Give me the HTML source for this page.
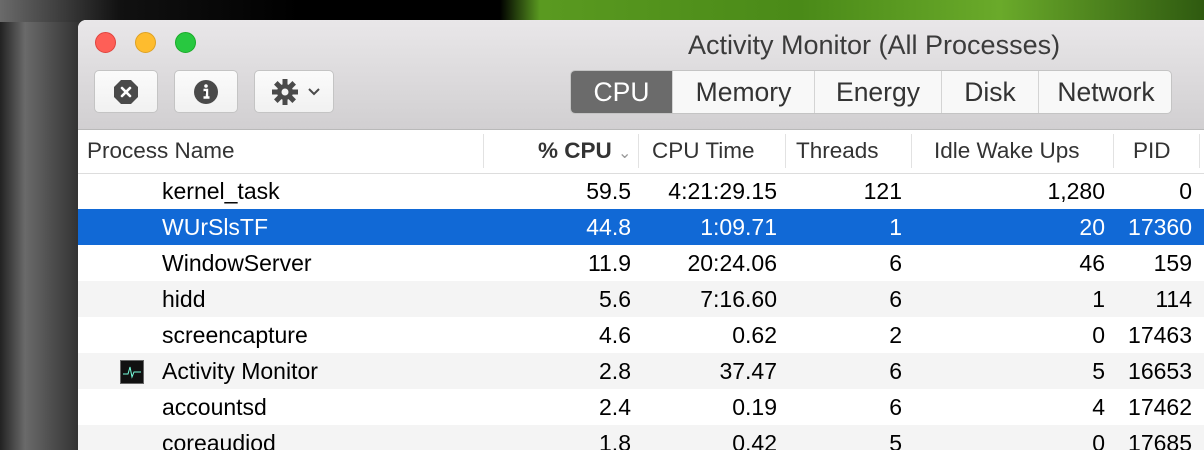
<!DOCTYPE html><html><head><style>
body{margin:0;width:1204px;height:436px;overflow:hidden;position:relative;font-family:"Liberation Sans",sans-serif;background:linear-gradient(90deg,#222 0,#6a6a6a 25px,#555 45px,#333 78px);}
.top{position:absolute;left:0;top:0;width:1204px;height:22px;background:linear-gradient(90deg,#6a6a6a 0,#111 120px,#000 300px,#000 500px,#5a9a20 540px,#4a8a18 800px,#6aaa2a 1000px,#2f5a10 1204px);}
.win{position:absolute;left:78px;top:20px;width:1140px;height:430px;background:#fff;border-radius:8px 8px 0 0;overflow:hidden;}
.tb{position:absolute;left:0;top:0;width:100%;height:109px;background:linear-gradient(#e9e7e9,#d1cfd1);border-bottom:1px solid #b9b9b9;}
.dot{position:absolute;top:12px;width:21px;height:21px;border-radius:50%;}
.title{position:absolute;left:610px;top:10px;font-size:27px;color:#3b3b3b;}
.btn{position:absolute;top:50px;height:43px;background:linear-gradient(#fbfbfb,#f1f1f1);border:1px solid #c4c4c4;border-radius:5px;box-sizing:border-box;}
.seg{position:absolute;top:50px;height:44px;border:1px solid #c4c4c4;border-radius:5px;background:#f8f8f8;box-sizing:border-box;left:492px;width:602px;overflow:hidden;}
.seg div{position:absolute;top:0;height:42px;line-height:42px;text-align:center;font-size:26.5px;color:#333;border-right:1px solid #d4d4d4;box-sizing:border-box;}
.hdr{position:absolute;top:110px;left:0;width:100%;height:43px;border-bottom:1px solid #ddd;font-size:22.5px;color:#333;}
.hdr span{position:absolute;top:8px;}
.div{position:absolute;top:4px;height:34px;width:1px;background:#e2e2e2;}
.row{position:absolute;left:0;width:100%;height:36px;font-size:23px;color:#000;}
.row span{position:absolute;top:5px;}
.g{background:#f4f4f4}.s{background:#1169d6;color:#fff}
.c1{left:84px}.r{text-align:right}
</style></head><body>
<div class="top"></div>
<div class="win">
<div class="tb">
<div class="dot" style="left:17px;background:#fe5f57;border:1px solid #e0443e;box-sizing:border-box"></div>
<div class="dot" style="left:57px;background:#febc2e;border:1px solid #dea123;box-sizing:border-box"></div>
<div class="dot" style="left:97px;background:#28c840;border:1px solid #1aab29;box-sizing:border-box"></div>
<div class="title">Activity Monitor (All Processes)</div>
<div class="btn" style="left:16px;width:64px"><svg width="62" height="41" viewBox="0 0 62 41"><polygon points="26,9 36,9 43,16 43,26 36,33 26,33 19,26 19,16" fill="#4a4a4a"/><path d="M27 17l8 8M35 17l-8 8" stroke="#fff" stroke-width="2.6" stroke-linecap="round"/></svg></div>
<div class="btn" style="left:96px;width:64px"><svg width="62" height="41" viewBox="0 0 62 41"><circle cx="31" cy="21" r="12" fill="#4a4a4a"/><circle cx="31" cy="15" r="1.8" fill="#fff"/><path d="M28.5 19h3.5v7M28.5 26.5h6" stroke="#fff" stroke-width="2.4"/></svg></div>
<div class="btn" style="left:176px;width:80px"><svg width="78" height="41" viewBox="0 0 78 41"><g transform="translate(30,21)" fill="#4a4a4a"><circle r="8"/><rect x="-2.5" y="-13" width="5" height="26"/><rect x="-2.5" y="-13" width="5" height="26" transform="rotate(45)"/><rect x="-2.5" y="-13" width="5" height="26" transform="rotate(90)"/><rect x="-2.5" y="-13" width="5" height="26" transform="rotate(135)"/><circle r="3.5" fill="#f5f5f5"/></g><path d="M54 18l5 5 5-5" stroke="#4a4a4a" stroke-width="2" fill="none"/></svg></div>
<div class="seg">
<div style="left:0;width:102px;background:#6b6b6b;color:#fff">CPU</div>
<div style="left:102px;width:142px">Memory</div>
<div style="left:244px;width:127px">Energy</div>
<div style="left:371px;width:97px">Disk</div>
<div style="left:468px;width:134px;border:0">Network</div>
</div>
</div>
<div class="hdr">
<span style="left:9px">Process Name</span>
<div class="div" style="left:405px"></div>
<span style="left:460px;font-weight:bold;color:#333">% CPU <span style="position:static;color:#999;font-weight:normal;font-size:16px">&#8964;</span></span>
<div class="div" style="left:560px"></div>
<span style="left:574px">CPU Time</span>
<div class="div" style="left:707px"></div>
<span style="left:718px">Threads</span>
<div class="div" style="left:833px"></div>
<span style="left:856px">Idle Wake Ups</span>
<div class="div" style="left:1035px"></div>
<span style="left:1055px">PID</span>
<div class="div" style="left:1121px"></div>
</div>
<div id="rows"></div>
</div>
<script>
var d=[["kernel_task","59.5","4:21:29.15","121","1,280","0",""],["WUrSlsTF","44.8","1:09.71","1","20","17360","s"],["WindowServer","11.9","20:24.06","6","46","159",""],["hidd","5.6","7:16.60","6","1","114","g"],["screencapture","4.6","0.62","2","0","17463",""],["Activity Monitor","2.8","37.47","6","5","16653","g"],["accountsd","2.4","0.19","6","4","17462",""],["coreaudiod","1.8","0.42","5","0","17685","g"]];
var h="";var R=[553,699,824,1027,1114];
d.forEach(function(r,i){var top=153+i*36;h+='<div class="row '+r[6]+'" style="top:'+top+'px"><span class="c1">'+r[0]+'</span>';
for(var k=0;k<5;k++)h+='<span class="r" style="right:'+(1140-R[k])+'px">'+r[k+1]+'</span>';
if(r[0]=="Activity Monitor")h+='<div style="position:absolute;left:42px;top:7px;width:24px;height:24px;background:#111;border:1px solid #666;box-sizing:border-box"><svg width="22" height="22"><path d="M2 13h5l2-7 2 10 2-5h7" stroke="#7fd" stroke-width="1" fill="none"/></svg></div>';
h+='</div>';});
document.getElementById("rows").innerHTML=h;
</script>
</body></html>
